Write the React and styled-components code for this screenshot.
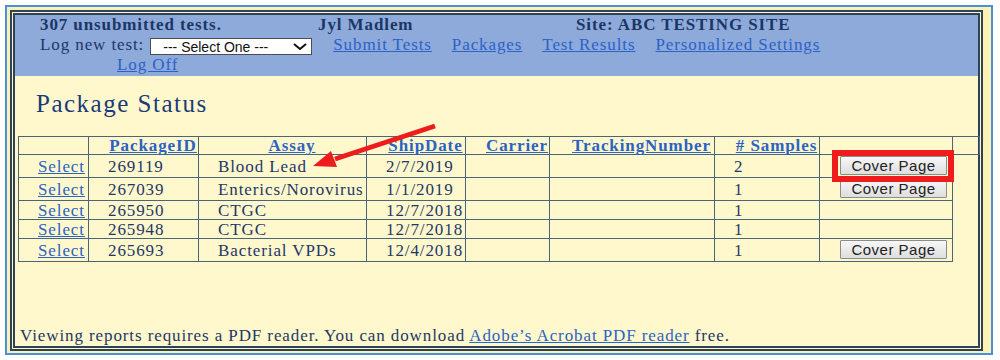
import React from "react";
import styled, { createGlobalStyle } from "styled-components";

const GlobalStyle = createGlobalStyle`
  html, body {
    margin: 0;
    padding: 0;
    background: #ffffff;
  }
  body {
    font-family: "Liberation Serif", "Times New Roman", serif;
    color: #1d3767;
  }
`;

const Frame = styled.div`
  position: relative;
  margin: 5px 0 0 5px;
  width: 988px;
  height: 350px;
  box-sizing: border-box;
  border: 2px solid #4a8fdc;
  background: #fcf2b6;
  padding: 3px 8px 2px 3px;
`;

const Inner = styled.div`
  height: 100%;
  box-sizing: border-box;
  border: 5px double #2e4356;
  background: #fff8cc;
  display: flex;
  flex-direction: column;
`;

const Header = styled.div`
  background: #8eaadb;
  height: 61px;
  padding-left: 25px;
  font-size: 17px;
  letter-spacing: 0.9px;
  line-height: 20px;
`;

const TopLine = styled.div`
  display: grid;
  grid-template-columns: 278px 258px 1fr;
  font-weight: bold;
  color: #1c3664;
`;

const NavLine = styled.div`
  display: flex;
  align-items: center;
  gap: 20px;
  height: 20px;
`;

const Label = styled.span`
  display: flex;
  align-items: center;
  gap: 6px;
  margin-right: 1px;
`;

const SelectWrap = styled.span`
  position: relative;
  display: inline-block;
  width: 162px;
  height: 17px;
`;

const Select = styled.select`
  appearance: none;
  width: 100%;
  height: 100%;
  box-sizing: border-box;
  border: 1px solid #4d4d4d;
  border-radius: 0;
  background: #ffffff;
  padding: 0 0 0 12px;
  font-family: "Liberation Sans", Arial, sans-serif;
  font-size: 14px;
  color: #111;
  outline: none;
`;

const Chevron = styled.svg`
  position: absolute;
  right: 5px;
  top: 6px;
  pointer-events: none;
`;

const Link = styled.a`
  color: #2a62c6;
  text-decoration: underline;
  font-weight: ${(p) => (p.$bold ? "bold" : "normal")};
  cursor: pointer;
`;

const LogOffLine = styled.div`
  padding-left: 77px;
  height: 20px;
`;

const Main = styled.div`
  flex: 1;
  display: flex;
  flex-direction: column;
  font-size: 17px;
  letter-spacing: 0.9px;
`;

const Title = styled.h2`
  margin: 13px 0 0 21px;
  font-size: 25px;
  letter-spacing: 1.5px;
  line-height: 30px;
  font-weight: normal;
  color: #1b3a7a;
`;

const Table = styled.table`
  margin: 17px 0 0 3px;
  border-collapse: collapse;
  table-layout: fixed;
  width: 961px;

  td, th {
    border: 1px solid #4c6478;
    padding: 0 0 0 19px;
    line-height: 17px;
    white-space: nowrap;
    overflow: visible;
  }
`;

const HeadCell = styled.th`
  text-align: center;
  font-weight: bold;
  height: 16px;
`;

const Row = styled.tr`
  height: ${(p) => (p.$tall ? 23 : 19)}px;
`;

const Cell = styled.td`
  text-align: left;
  vertical-align: middle;
  color: #1d3767;
`;

const ButtonCell = styled.td`
  vertical-align: top;
`;

const CoverButton = styled.button`
  display: block;
  width: 107px;
  height: 19px;
  margin: 1px 0 0 1px;
  padding: 0;
  border: 1px solid #8c8c8c;
  border-radius: 1px;
  background: linear-gradient(#f7f7f7, #dedede);
  font-family: "Liberation Sans", Arial, sans-serif;
  font-size: 15px;
  letter-spacing: 0.5px;
  color: #222;
  line-height: 17px;
`;

const Footer = styled.div`
  margin-top: auto;
  padding: 0 0 1px 5px;
  line-height: 18px;
  color: #1d3767;
`;

const Annotation = styled.svg`
  position: absolute;
  left: -5px;
  top: -5px;
  pointer-events: none;
`;

const packages = [
  { id: "269119", assay: "Blood Lead", date: "2/7/2019", samples: "2", cover: true },
  { id: "267039", assay: "Enterics/Norovirus", date: "1/1/2019", samples: "1", cover: true },
  { id: "265950", assay: "CTGC", date: "12/7/2018", samples: "1" },
  { id: "265948", assay: "CTGC", date: "12/7/2018", samples: "1" },
  { id: "265693", assay: "Bacterial VPDs", date: "12/4/2018", samples: "1", cover: true },
];

const widths = [70, 110, 168, 99, 84, 165, 105, 133, 27];
const headers = ["PackageID", "Assay", "ShipDate", "Carrier", "TrackingNumber", "# Samples"];

export default function App() {
  return (
    <>
      <GlobalStyle />
      <Frame>
        <Inner>
          <Header>
            <TopLine>
              <span>307 unsubmitted tests.</span>
              <span>Jyl Madlem</span>
              <span>Site: ABC TESTING SITE</span>
            </TopLine>
            <NavLine>
              <Label>
                Log new test:
                <SelectWrap>
                  <Select defaultValue="">
                    <option value="">--- Select One ---</option>
                  </Select>
                  <Chevron width="14" height="7" viewBox="0 0 14 7">
                    <path d="M1 1 L7 6 L13 1" fill="none" stroke="#111" strokeWidth="2" />
                  </Chevron>
                </SelectWrap>
              </Label>
              <Link>Submit Tests</Link>
              <Link>Packages</Link>
              <Link>Test Results</Link>
              <Link>Personalized Settings</Link>
            </NavLine>
            <LogOffLine>
              <Link>Log Off</Link>
            </LogOffLine>
          </Header>

          <Main>
            <Title>Package Status</Title>
            <Table>
              <colgroup>
                {widths.map((w, i) => (
                  <col key={i} style={{ width: w }} />
                ))}
              </colgroup>
              <thead>
                <tr>
                  <HeadCell />
                  {headers.map((h) => (
                    <HeadCell key={h}>
                      <Link $bold>{h}</Link>
                    </HeadCell>
                  ))}
                  <HeadCell />
                  <HeadCell />
                </tr>
              </thead>
              <tbody>
                {packages.map((p) => (
                  <Row key={p.id} $tall={p.cover}>
                    <Cell>
                      <Link>Select</Link>
                    </Cell>
                    <Cell>{p.id}</Cell>
                    <Cell>{p.assay}</Cell>
                    <Cell>{p.date}</Cell>
                    <Cell />
                    <Cell />
                    <Cell>{p.samples}</Cell>
                    <ButtonCell>{p.cover && <CoverButton>Cover Page</CoverButton>}</ButtonCell>
                  </Row>
                ))}
              </tbody>
            </Table>
            <Footer>
              Viewing reports requires a PDF reader. You can download{" "}
              <Link>Adobe’s Acrobat PDF reader</Link> free.
            </Footer>
          </Main>
        </Inner>

        <Annotation width="1000" height="360" viewBox="0 0 1000 360">
          <rect x="833" y="151" width="116" height="26" fill="none" stroke="#ee1c1c" strokeWidth="6" />
          <line x1="433" y1="124" x2="333" y2="157" stroke="#ee1c1c" strokeWidth="5" />
          <polygon points="311,164 335,165 329,149" fill="#ee1c1c" />
        </Annotation>
      </Frame>
    </>
  );
}
